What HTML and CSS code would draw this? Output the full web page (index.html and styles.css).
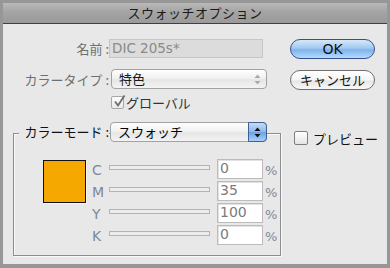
FILE: index.html
```html
<!DOCTYPE html>
<html lang="ja">
<head>
<meta charset="utf-8">
<link rel="stylesheet" href="styles.css">
</head>
<body>
<div class="window">
  <div class="titlebar">スウォッチオプション</div>
  <div class="content">
    <div class="main">
      <div class="row row-name">
        <span class="label dim">名前 :</span>
        <div class="textfield">DIC 205s*</div>
      </div>
      <div class="row row-type">
        <span class="label dim">カラータイプ :</span>
        <div class="popup disabled">
          <span class="ptext">特色</span>
          <span class="arrows"><svg width="7" height="11" viewBox="0 0 7 11"><path d="M3.5 0.5 L6.5 4 L0.5 4 Z M0.5 7 L6.5 7 L3.5 10.5 Z" fill="#a9a9a9"/></svg></span>
        </div>
      </div>
      <div class="row row-global">
        <span class="check checked"><svg width="14" height="14" viewBox="0 0 14 14"><path d="M3 6.5 L6 10.5 L12.5 0.5" fill="none" stroke="#6d6d6d" stroke-width="1.8"/></svg></span>
        <span class="glabel">グローバル</span>
      </div>
      <div class="group">
        <div class="group-head">
          <span class="glegend">カラーモード :</span>
          <div class="popup active">
            <span class="ptext">スウォッチ</span>
            <span class="arrows"><svg width="7" height="11" viewBox="0 0 7 11"><path d="M3.5 0.5 L6.5 4 L0.5 4 Z M0.5 7 L6.5 7 L3.5 10.5 Z" fill="#111"/></svg></span>
          </div>
        </div>
        <div class="group-body">
          <div class="swatch"></div>
          <div class="sliders">
            <div class="srow"><span class="letter">C</span><span class="track"></span><span class="num">0</span><span class="pct">%</span></div>
            <div class="srow"><span class="letter">M</span><span class="track"></span><span class="num">35</span><span class="pct">%</span></div>
            <div class="srow"><span class="letter">Y</span><span class="track"></span><span class="num">100</span><span class="pct">%</span></div>
            <div class="srow"><span class="letter">K</span><span class="track"></span><span class="num">0</span><span class="pct">%</span></div>
          </div>
        </div>
      </div>
    </div>
    <div class="side">
      <div class="btn ok">OK</div>
      <div class="btn cancel">キャンセル</div>
      <div class="preview"><span class="pcheck"></span><span class="plabel">プレビュー</span></div>
    </div>
  </div>
</div>
</body>
</html>
```
FILE: styles.css
```css
* { box-sizing: border-box; }
html, body { margin: 0; padding: 0; }
body {
  width: 390px;
  height: 268px;
  overflow: hidden;
  font-family: "DejaVu Sans", "Noto Sans CJK JP", sans-serif;
  font-size: 13px;
  color: #111;
}
.window {
  width: 390px;
  height: 268px;
  border: 3px solid #979797;
  border-bottom-width: 4px;
  background: #e8e8e8;
  display: flex;
  flex-direction: column;
}
.titlebar {
  height: 21px;
  flex: none;
  background: linear-gradient(#b9b9b9, #a4a4a4 45%, #9a9a9a);
  border-bottom: 1px solid #404040;
  text-align: center;
  font-family: "Noto Sans CJK JP", sans-serif;
  font-size: 13px;
  letter-spacing: 0.5px;
  line-height: 20px;
  color: #1a1a1a;
}
.content {
  flex: 1;
  display: flex;
  padding: 15px 0 0 10px;
}
.main { width: 268px; flex: none; display: flex; flex-direction: column; }
.row { display: flex; align-items: center; }
.label {
  width: 96px;
  text-align: right;
  white-space: nowrap;
  font-family: "Noto Sans CJK JP", sans-serif;
}
.dim { color: #6f6f6f; }
.row-name { height: 19px; }
.textfield {
  width: 154px;
  height: 19px;
  background: #dcdcdc;
  border: 1px solid #c6c6c6;
  color: #8a8a8a;
  padding-left: 2px;
  line-height: 17px;
  font-size: 13.5px;
}
.row-type { height: 20px; margin-top: 11px; }
.row-type .popup { margin-left: 2px; width: 156px; }
.popup {
  display: flex;
  align-items: center;
  height: 20px;
  border: 1px solid #a2a2a2;
  border-radius: 4px;
  background: linear-gradient(#fefefe, #f1f1f1 45%, #e6e6e6 55%, #f3f3f3);
  padding-left: 7px;
  font-family: "Noto Sans CJK JP", sans-serif;
  font-size: 13px;
  color: #1a1a1a;
}
.ptext { flex: 1; line-height: 18px; }
.arrows {
  width: 18px;
  height: 100%;
  display: flex;
  align-items: center;
  justify-content: center;
}
.popup.active .arrows {
  width: 19px;
  margin-right: -1px;
  height: 20px;
  border: 1px solid #3f5f98;
  border-radius: 0 4px 4px 0;
  background: linear-gradient(#c6dcf4, #8fb9ea 48%, #6ea2e2 52%, #a9d0fa);
}
.popup.active { color: #000; }
.row-global { height: 14px; margin-top: 6px; }
.check {
  margin-left: 98px;
  width: 13px;
  height: 13px;
  border: 1px solid #a7a7a7;
  border-radius: 2px;
  background: linear-gradient(#fdfdfd, #e9e9e9);
  position: relative;
}
.check svg { position: absolute; left: 0; top: -2px; }
.glabel {
  margin-left: 2px;
  font-family: "Noto Sans CJK JP", sans-serif;
  color: #333;
}
.group {
  margin-top: 24px;
  height: 123px;
  border: 1px solid #8c8c8c;
  box-shadow: 1px 1px 0 #fafafa, inset 1px 1px 0 #fafafa;
  display: flex;
  flex-direction: column;
}
.group-head {
  display: flex;
  align-items: center;
  height: 20px;
  margin-top: -12px;
}
.glegend {
  margin-left: 5px;
  width: 90px;
  text-align: right;
  background: #e8e8e8;
  font-family: "Noto Sans CJK JP", sans-serif;
  color: #111;
  line-height: 20px;
  white-space: nowrap;
}
.group-head .popup { margin-left: 1px; width: 157px; }
.group-body {
  display: flex;
  margin-top: 17px;
  padding-left: 29px;
}
.swatch {
  width: 43px;
  height: 43px;
  margin-top: 1px;
  background: #f4a800;
  border: 1px solid #111;
  box-shadow: 1px 1px 0 #f7f7f7;
}
.sliders {
  margin-left: 6px;
  display: flex;
  flex-direction: column;
  gap: 2px;
}
.srow { display: flex; align-items: center; height: 20px; }
.letter {
  width: 17px;
  color: #7f8898;
  font-size: 14px;
  padding-left: 0;
  margin-top: 2px;
}
.track {
  width: 101px;
  height: 5px;
  margin-top: -4px;
  border: 1px solid #b4b4b4;
  background: #ececec;
}
.num {
  margin-left: 7px;
  width: 46px;
  height: 20px;
  background: #fff;
  border: 1px solid #bcbcbc;
  box-shadow: inset 1px 1px 0 #e2e2e2;
  color: #7b7b7b;
  padding-left: 2px;
  line-height: 16px;
  font-size: 14px;
}
.pct { margin-left: 2px; color: #7f8898; font-size: 13px; margin-top: 3px; }
.side {
  margin-left: 9px;
  width: 85px;
  flex: none;
  display: flex;
  flex-direction: column;
}
.btn {
  height: 20px;
  border-radius: 10px;
  text-align: center;
  line-height: 18px;
  font-size: 13px;
}
.ok {
  border: 1px solid #34518a;
  background: linear-gradient(#d6e8fb, #a2c8f2 45%, #7fb2ec 55%, #b6dafe);
  color: #111;
  font-family: "DejaVu Sans", sans-serif;
  font-size: 14px;
}
.cancel {
  margin-top: 11px;
  border: 1px solid #6e6e6e;
  background: linear-gradient(#ffffff, #f4f4f4 50%, #e6e6e6 55%, #f8f8f8);
  font-family: "Noto Sans CJK JP", sans-serif;
  color: #111;
}
.preview {
  margin-top: 41px;
  display: flex;
  align-items: center;
  height: 14px;
  white-space: nowrap;
}
.pcheck {
  flex: none;
  margin-left: 4px;
  width: 14px;
  height: 14px;
  border: 1px solid #7e7e7e;
  border-radius: 2px;
  background: linear-gradient(#ffffff, #e4e4e4);
}
.plabel {
  margin-left: 5px;
  font-family: "Noto Sans CJK JP", sans-serif;
  color: #111;
}
```
